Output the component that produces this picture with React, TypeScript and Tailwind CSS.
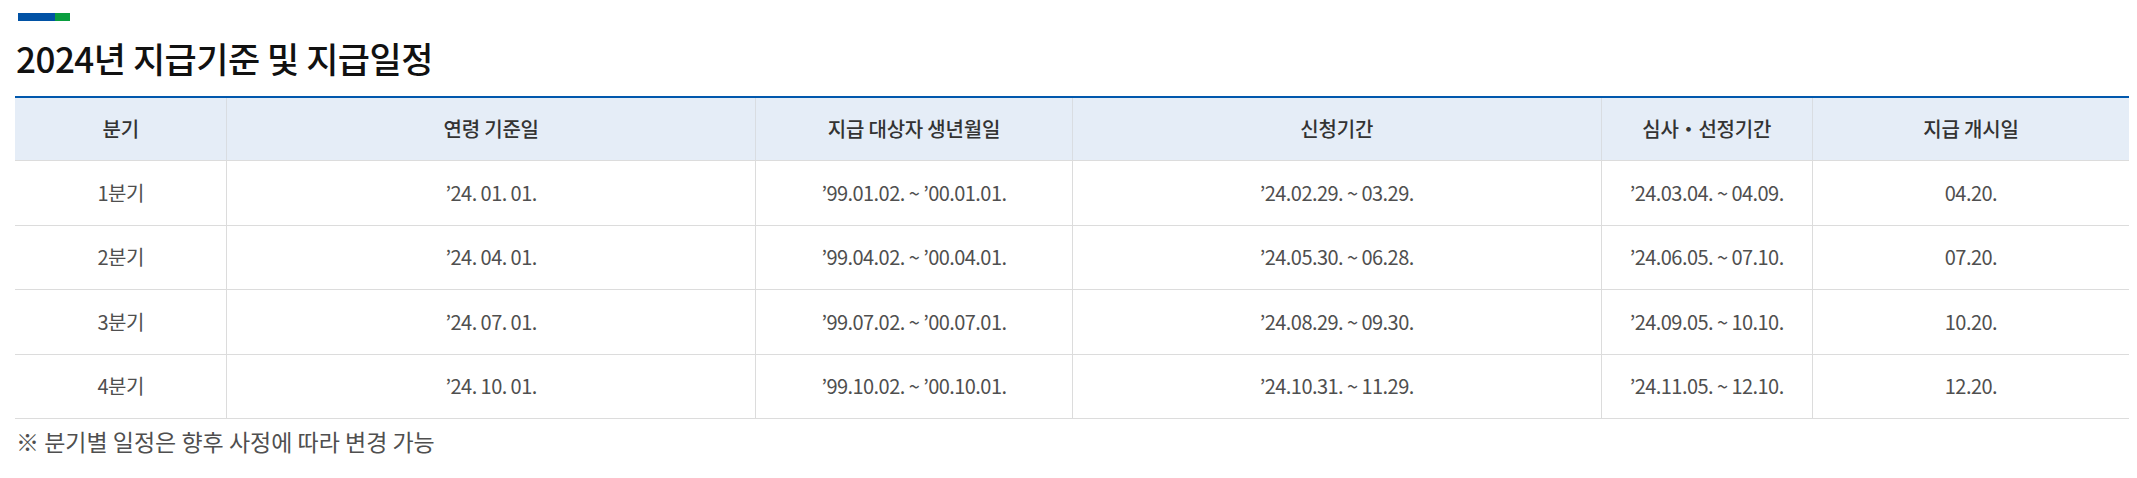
const cols = ['분기', '연령 기준일', '지급 대상자 생년월일', '신청기간', '심사・선정기간', '지급 개시일'];

const rows = [
  ['1분기', '’24. 01. 01.', '’99.01.02. ~ ’00.01.01.', '’24.02.29. ~ 03.29.', '’24.03.04. ~ 04.09.', '04.20.'],
  ['2분기', '’24. 04. 01.', '’99.04.02. ~ ’00.04.01.', '’24.05.30. ~ 06.28.', '’24.06.05. ~ 07.10.', '07.20.'],
  ['3분기', '’24. 07. 01.', '’99.07.02. ~ ’00.07.01.', '’24.08.29. ~ 09.30.', '’24.09.05. ~ 10.10.', '10.20.'],
  ['4분기', '’24. 10. 01.', '’99.10.02. ~ ’00.10.01.', '’24.10.31. ~ 11.29.', '’24.11.05. ~ 12.10.', '12.20.'],
];

const App = () => {
  return (
    <div className="w-[2137px] h-[478px] bg-white font-['Noto_Sans_CJK_KR','Noto_Sans',sans-serif] pl-[15px] pr-[8px]">
      {/* Title */}
      <div className="pt-[13px] pl-[3px] flex">
        <span className="block w-[37px] h-[8px] bg-[#0152a5]" />
        <span className="block w-[15px] h-[8px] bg-[#0a9e3f]" />
      </div>
      <h2 className="mt-[16px] ml-[1px] text-[35px] leading-[42px] font-medium text-[#111] tracking-[-0.5px]">
        2024년 지급기준 및 지급일정
      </h2>

      {/* Schedule table */}
      <div className="mt-[17px]">
        <div className="grid grid-cols-[10fr_25fr_15fr_25fr_10fr_15fr] h-[65px] border-t-2 border-b border-t-[#0158ad] border-b-[#dcdcdc] bg-[#e5edf7]">
          {cols.map((c, i) => (
            <div
              key={i}
              className={`flex items-center justify-center text-[20px] font-medium text-[#333] tracking-[-0.2px] ${i > 0 ? 'border-l border-[#d9dde2]' : ''}`}
            >
              {c}
            </div>
          ))}
        </div>
        {rows.map((r, ri) => (
          <div
            key={ri}
            className="grid grid-cols-[10fr_25fr_15fr_25fr_10fr_15fr] h-[64.5px] border-b border-[#dcdcdc]"
          >
            {r.map((cell, ci) => (
              <div
                key={ci}
                className={`flex items-center justify-center text-[20px] text-[#4f4f4f] tracking-[-0.55px] ${ci > 0 ? 'border-l border-[#dcdcdc]' : ''}`}
              >
                {cell}
              </div>
            ))}
          </div>
        ))}
      </div>

      <p className="mt-[7px] ml-[1px] text-[23px] leading-[30px] text-[#4f4f4f]">※ 분기별 일정은 향후 사정에 따라 변경 가능</p>
    </div>
  );
};

export default App;
